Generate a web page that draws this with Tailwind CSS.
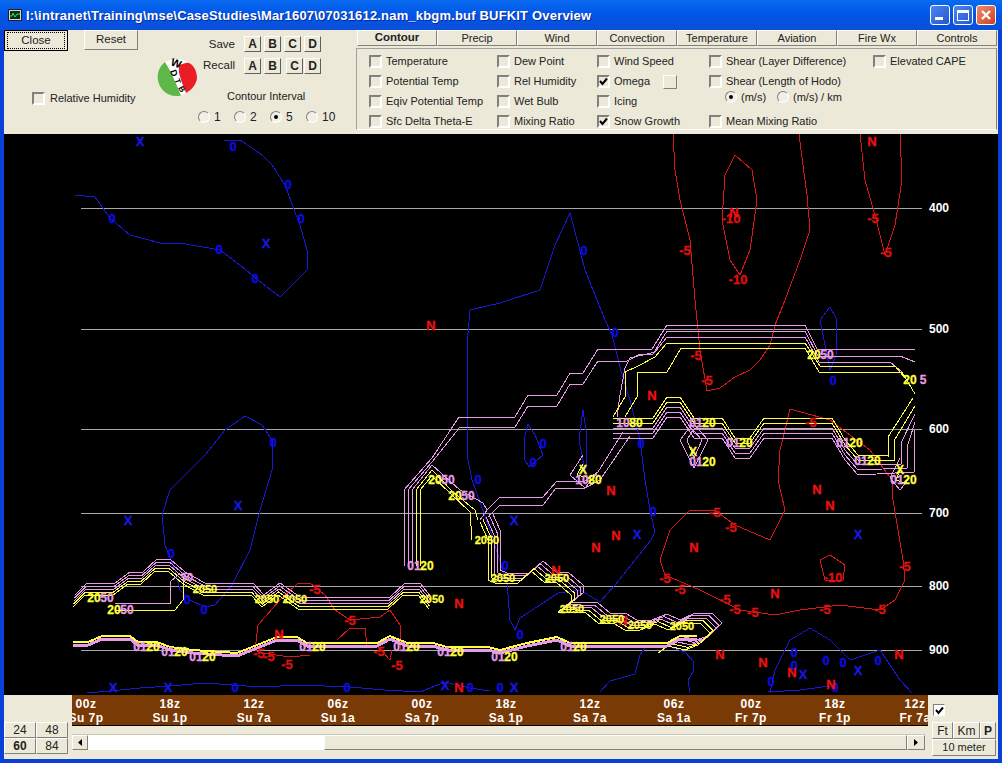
<!DOCTYPE html>
<html lang="en">
<head>
  <meta charset="UTF-8" />
  <title>BUFKIT Overview</title>
  <script src="https://cdn.jsdelivr.net/npm/@tailwindcss/browser@4"></script>
</head>
<body class="w-[1002px] h-[763px] overflow-hidden flex flex-col bg-[#0a3fd8] text-[11px] leading-none text-black font-['Liberation_Sans',sans-serif]">
  <!-- title bar -->
  <header class="h-[30px] shrink-0 flex items-center pl-[8px] pr-[6px] bg-gradient-to-b from-[#0a6af0] via-[#0255e8] to-[#0a4fd8]">
    <svg width="14" height="12" viewBox="0 0 14 12" class="shrink-0">
      <rect x="0.5" y="0.5" width="13" height="11" fill="#d8d8d8" stroke="#202020" />
      <rect x="2" y="2" width="10" height="8" fill="#083018" />
      <path d="M2 7h2l1-3 2 4 2-3h3" fill="none" stroke="#40e040" />
    </svg>
    <h1 class="ml-[4px] flex-1 text-white font-bold text-[13px] tracking-[0.18px] whitespace-nowrap [text-shadow:1px_1px_0_#0a2a90]">I:\intranet\Training\mse\CaseStudies\Mar1607\07031612.nam_kbgm.buf BUFKIT Overview</h1>
    <div class="flex gap-[3px]">
      <div class="w-[20px] h-[20px] rounded-[3px] border border-white bg-gradient-to-br from-[#4f86f0] to-[#2455d0] flex items-end pl-[4px] pb-[4px]"><span class="block w-[8px] h-[3px] bg-white"></span></div>
      <div class="w-[20px] h-[20px] rounded-[3px] border border-white bg-gradient-to-br from-[#4f86f0] to-[#2455d0] flex items-center justify-center"><span class="block w-[12px] h-[11px] border border-white border-t-[3px]"></span></div>
      <div class="w-[20px] h-[20px] rounded-[3px] border border-white bg-gradient-to-br from-[#ec8a6c] to-[#d03c18] flex items-center justify-center">
        <svg width="12" height="12" viewBox="0 0 12 12"><path d="M2 2l8 8M10 2l-8 8" stroke="#fff" stroke-width="2.4" /></svg>
      </div>
    </div>
  </header>

  <main class="flex-1 mx-[4px] mb-[4px] flex flex-col bg-[#ece9d8] min-h-0">
    <!-- toolbar -->
    <section class="h-[104px] shrink-0 flex">
      <div class="w-[150px] shrink-0">
        <div class="flex items-start">
          <button class="w-[64px] h-[21px] border border-black bg-[#ece9d8] flex items-center justify-center text-[#222] text-[11.5px]"><span class="border border-dotted border-black px-[8px] py-[2px] w-[58px]">Close</span></button>
          <button class="ml-[16px] w-[54px] h-[20px] bg-[#ece9d8] border border-t-white border-l-white border-r-[#808080] border-b-[#808080] text-[#222] text-[11.5px]">Reset</button>
        </div>
        <div class="mt-[41px] ml-[28px] flex items-center gap-[5px]">
          <span class="block w-[13px] h-[13px] border-2 border-t-[#808080] border-l-[#808080] border-r-white border-b-white bg-[#ece9d8]"></span>
          <span class="text-[#222] whitespace-nowrap">Relative Humidity</span>
        </div>
      </div>

      <div class="w-[43px] shrink-0 pl-[3px] pt-[27px]">
        <svg width="40" height="40" viewBox="0 0 40 40">
          <path d="M8 5A19 19 0 0 0 24 38.5C20 28 14 14 8 5Z" fill="#5cb848" />
          <path d="M22 8C28 2 39 6 40 20C40 28 33 34 29 36C26 28 20 16 22 8Z" fill="#ec1c24" />
          <path d="M8 5Q20 -1 32 5L22 8C20 16 26 28 29 36L24 38.5C20 28 14 14 8 5Z" fill="#fff" />
          <g font-family="Liberation Sans, sans-serif" font-weight="700" fill="#000" text-anchor="middle">
            <text x="19" y="10" font-size="11" transform="rotate(20 19 7)">W</text>
            <text x="17" y="19" font-size="9" transform="rotate(70 17 16)">D</text>
            <text x="21" y="27" font-size="8" transform="rotate(70 21 24)">T</text>
            <text x="25" y="35" font-size="8" transform="rotate(60 25 32)">B</text>
          </g>
        </svg>
      </div>

      <div class="w-[159px] shrink-0 pt-[6px] text-[#222]">
        <div class="flex items-center h-[16px] text-[11.5px]">
          <span class="w-[38px] text-right mr-[9px] mt-[2px]">Save</span>
          <div class="flex gap-[3px] font-bold text-[12px]">
            <button class="w-[17px] h-[16px] bg-[#ece9d8] border border-t-white border-l-white border-r-[#606060] border-b-[#606060]">A</button>
            <button class="w-[17px] h-[16px] bg-[#ece9d8] border border-t-white border-l-white border-r-[#606060] border-b-[#606060]">B</button>
            <button class="w-[17px] h-[16px] bg-[#ece9d8] border border-t-white border-l-white border-r-[#606060] border-b-[#606060]">C</button>
            <button class="w-[17px] h-[16px] bg-[#ece9d8] border border-t-white border-l-white border-r-[#606060] border-b-[#606060]">D</button>
          </div>
        </div>
        <div class="flex items-center h-[16px] mt-[6px] text-[11.5px]">
          <span class="w-[38px] text-right mr-[9px]">Recall</span>
          <div class="flex gap-[3px] font-bold text-[12px]">
            <button class="w-[17px] h-[16px] bg-[#ece9d8] border border-t-white border-l-white border-r-[#606060] border-b-[#606060]">A</button>
            <button class="w-[17px] h-[16px] bg-[#ece9d8] border border-t-white border-l-white border-r-[#606060] border-b-[#606060]">B</button>
            <button class="ml-[2px] w-[17px] h-[16px] bg-[#ece9d8] border border-t-white border-l-white border-r-[#606060] border-b-[#606060]">C</button>
            <button class="ml-[-2px] w-[17px] h-[16px] bg-[#ece9d8] border border-t-white border-l-white border-r-[#606060] border-b-[#606060]">D</button>
          </div>
        </div>
        <p class="mt-[17px] ml-[30px] whitespace-nowrap">Contour Interval</p>
        <div class="mt-[9px] flex items-center text-[12px]">
          <span class="block ml-[1px] w-[12px] h-[12px] rounded-full border border-t-[#808080] border-l-[#808080] border-r-white border-b-white bg-[#f2f0e6]"></span><span class="ml-[4px] w-[20px]">1</span>
          <span class="block w-[12px] h-[12px] rounded-full border border-t-[#808080] border-l-[#808080] border-r-white border-b-white bg-[#f2f0e6]"></span><span class="ml-[4px] w-[20px]">2</span>
          <span class="w-[12px] h-[12px] rounded-full border border-t-[#808080] border-l-[#808080] border-r-white border-b-white bg-[#f2f0e6] flex items-center justify-center"><span class="block w-[4px] h-[4px] rounded-full bg-black"></span></span><span class="ml-[4px] w-[20px]">5</span>
          <span class="block w-[12px] h-[12px] rounded-full border border-t-[#808080] border-l-[#808080] border-r-white border-b-white bg-[#f2f0e6]"></span><span class="ml-[4px]">10</span>
        </div>
      </div>

      <div class="flex-1 min-w-0">
        <nav class="h-[16px] flex pl-[1px] text-[#222]">
          <button class="w-[80px] h-[16px] font-bold text-[11.5px] border border-t-white border-l-white border-r-[#808080] border-b-[#808080]">Contour</button>
          <button class="w-[80px] h-[16px] border border-t-white border-l-white border-r-[#808080] border-b-[#808080]">Precip</button>
          <button class="w-[80px] h-[16px] border border-t-white border-l-white border-r-[#808080] border-b-[#808080]">Wind</button>
          <button class="w-[80px] h-[16px] border border-t-white border-l-white border-r-[#808080] border-b-[#808080]">Convection</button>
          <button class="w-[80px] h-[16px] border border-t-white border-l-white border-r-[#808080] border-b-[#808080]">Temperature</button>
          <button class="w-[80px] h-[16px] border border-t-white border-l-white border-r-[#808080] border-b-[#808080]">Aviation</button>
          <button class="w-[80px] h-[16px] border border-t-white border-l-white border-r-[#808080] border-b-[#808080]">Fire Wx</button>
          <button class="w-[80px] h-[16px] border border-t-white border-l-white border-r-[#808080] border-b-[#808080]">Controls</button>
        </nav>
        <div class="mt-[2px] w-[641px] h-[82px] border border-t-[#a0a0a0] border-l-[#a0a0a0] border-r-[#808080] border-b-white flex pl-[12px] text-[#222] whitespace-nowrap">
          <div class="w-[128px] flex flex-col pt-[6px] gap-[7px]">
            <label class="h-[13px] flex items-center gap-[4px]"><span class="block w-[13px] h-[13px] border-2 border-t-[#808080] border-l-[#808080] border-r-white border-b-white bg-[#ece9d8]"></span>Temperature</label>
            <label class="h-[13px] flex items-center gap-[4px]"><span class="block w-[13px] h-[13px] border-2 border-t-[#808080] border-l-[#808080] border-r-white border-b-white bg-[#ece9d8]"></span>Potential Temp</label>
            <label class="h-[13px] flex items-center gap-[4px]"><span class="block w-[13px] h-[13px] border-2 border-t-[#808080] border-l-[#808080] border-r-white border-b-white bg-[#ece9d8]"></span>Eqiv Potential Temp</label>
            <label class="h-[13px] flex items-center gap-[4px]"><span class="block w-[13px] h-[13px] border-2 border-t-[#808080] border-l-[#808080] border-r-white border-b-white bg-[#ece9d8]"></span>Sfc Delta Theta-E</label>
          </div>
          <div class="w-[100px] flex flex-col pt-[6px] gap-[7px]">
            <label class="h-[13px] flex items-center gap-[4px]"><span class="block w-[13px] h-[13px] border-2 border-t-[#808080] border-l-[#808080] border-r-white border-b-white bg-[#ece9d8]"></span>Dew Point</label>
            <label class="h-[13px] flex items-center gap-[4px]"><span class="block w-[13px] h-[13px] border-2 border-t-[#808080] border-l-[#808080] border-r-white border-b-white bg-[#ece9d8]"></span>Rel Humidity</label>
            <label class="h-[13px] flex items-center gap-[4px]"><span class="block w-[13px] h-[13px] border-2 border-t-[#808080] border-l-[#808080] border-r-white border-b-white bg-[#ece9d8]"></span>Wet Bulb</label>
            <label class="h-[13px] flex items-center gap-[4px]"><span class="block w-[13px] h-[13px] border-2 border-t-[#808080] border-l-[#808080] border-r-white border-b-white bg-[#ece9d8]"></span>Mixing Ratio</label>
          </div>
          <div class="w-[112px] flex flex-col pt-[6px] gap-[7px]">
            <label class="h-[13px] flex items-center gap-[4px]"><span class="block w-[13px] h-[13px] border-2 border-t-[#808080] border-l-[#808080] border-r-white border-b-white bg-[#ece9d8]"></span>Wind Speed</label>
            <label class="h-[13px] flex items-center gap-[4px]"><span class="w-[13px] h-[13px] border-2 border-t-[#808080] border-l-[#808080] border-r-white border-b-white bg-[#ece9d8] flex items-center justify-center"><svg width="9" height="9" viewBox="0 0 9 9"><path d="M1 4l2.5 3L8 1.5" fill="none" stroke="#000" stroke-width="2" /></svg></span>Omega<span class="block ml-[9px] w-[14px] h-[14px] border border-t-white border-l-white border-r-[#808080] border-b-[#808080]"></span></label>
            <label class="h-[13px] flex items-center gap-[4px]"><span class="block w-[13px] h-[13px] border-2 border-t-[#808080] border-l-[#808080] border-r-white border-b-white bg-[#ece9d8]"></span>Icing</label>
            <label class="h-[13px] flex items-center gap-[4px]"><span class="w-[13px] h-[13px] border-2 border-t-[#808080] border-l-[#808080] border-r-white border-b-white bg-[#ece9d8] flex items-center justify-center"><svg width="9" height="9" viewBox="0 0 9 9"><path d="M1 4l2.5 3L8 1.5" fill="none" stroke="#000" stroke-width="2" /></svg></span>Snow Growth</label>
          </div>
          <div class="w-[164px] flex flex-col pt-[6px]">
            <label class="h-[13px] flex items-center gap-[4px]"><span class="block w-[13px] h-[13px] border-2 border-t-[#808080] border-l-[#808080] border-r-white border-b-white bg-[#ece9d8]"></span>Shear (Layer Difference)</label>
            <label class="mt-[7px] h-[13px] flex items-center gap-[4px]"><span class="block w-[13px] h-[13px] border-2 border-t-[#808080] border-l-[#808080] border-r-white border-b-white bg-[#ece9d8]"></span>Shear (Length of Hodo)</label>
            <div class="mt-[3px] ml-[16px] h-[12px] flex items-center">
              <span class="w-[12px] h-[12px] rounded-full border border-t-[#808080] border-l-[#808080] border-r-white border-b-white bg-[#f2f0e6] flex items-center justify-center"><span class="block w-[4px] h-[4px] rounded-full bg-black"></span></span>
              <span class="ml-[4px] w-[36px]">(m/s)</span>
              <span class="block w-[12px] h-[12px] rounded-full border border-t-[#808080] border-l-[#808080] border-r-white border-b-white bg-[#f2f0e6]"></span>
              <span class="ml-[4px]">(m/s) / km</span>
            </div>
            <label class="mt-[12px] h-[13px] flex items-center gap-[4px]"><span class="block w-[13px] h-[13px] border-2 border-t-[#808080] border-l-[#808080] border-r-white border-b-white bg-[#ece9d8]"></span>Mean Mixing Ratio</label>
          </div>
          <div class="flex flex-col pt-[6px]">
            <label class="h-[13px] flex items-center gap-[4px]"><span class="block w-[13px] h-[13px] border-2 border-t-[#808080] border-l-[#808080] border-r-white border-b-white bg-[#ece9d8]"></span>Elevated CAPE</label>
          </div>
        </div>
      </div>
    </section>

    <!-- contour chart, drawn in window coordinates -->
    <svg id="chart" class="block h-[561px] w-[994px] shrink-0 bg-black" viewBox="4 134 994 561" font-family="Liberation Sans, sans-serif" font-weight="700"></svg>

    <!-- time axis and controls -->
    <section class="flex-1 flex min-h-0 text-[#222]">
      <div class="w-[68px] shrink-0 pt-[27px]">
        <div class="w-[64px] grid grid-cols-2 text-[12px]">
          <button class="h-[16px] border border-t-white border-l-white border-r-[#808080] border-b-[#808080]">24</button>
          <button class="h-[16px] border border-t-white border-l-white border-r-[#808080] border-b-[#808080]">48</button>
          <button class="h-[16px] font-bold border border-t-white border-l-white border-r-[#808080] border-b-[#808080]">60</button>
          <button class="h-[16px] border border-t-white border-l-white border-r-[#808080] border-b-[#808080]">84</button>
        </div>
      </div>
      <div class="w-[856px] shrink-0">
        <div class="h-[31px] bg-[#7a3a06] border-b border-black overflow-hidden flex text-white font-bold text-[12px] tracking-[0.5px] leading-[14px] pt-[2px]">
          <div class="w-[84px] shrink-0 text-center ml-[-28px]">00z<br />Su 7p</div>
          <div class="w-[84px] shrink-0 text-center">18z<br />Su 1p</div>
          <div class="w-[84px] shrink-0 text-center">12z<br />Su 7a</div>
          <div class="w-[84px] shrink-0 text-center">06z<br />Su 1a</div>
          <div class="w-[84px] shrink-0 text-center">00z<br />Sa 7p</div>
          <div class="w-[84px] shrink-0 text-center">18z<br />Sa 1p</div>
          <div class="w-[84px] shrink-0 text-center">12z<br />Sa 7a</div>
          <div class="w-[84px] shrink-0 text-center">06z<br />Sa 1a</div>
          <div class="w-[84px] shrink-0 text-center ml-[-7px]">00z<br />Fr 7p</div>
          <div class="w-[84px] shrink-0 text-center">18z<br />Fr 1p</div>
          <div class="w-[84px] shrink-0 text-center ml-[-4px]">12z<br />Fr 7a</div>
        </div>
        <div class="mt-[8px] h-[16px] w-[853px] flex border-t border-[#c8c8b8]">
          <button class="w-[16px] h-[15px] shrink-0 border border-t-white border-l-white border-r-[#808080] border-b-[#808080] flex items-center justify-center"><svg width="4" height="7" viewBox="0 0 4 7"><path d="M4 0v7L0 3.5z" /></svg></button>
          <div class="w-[236px] h-[15px] bg-white"></div>
          <div class="flex-1 h-[15px] border border-t-white border-l-white border-r-[#808080] border-b-[#808080]"></div>
          <button class="w-[18px] h-[15px] shrink-0 border border-t-white border-l-white border-r-[#808080] border-b-[#808080] flex items-center justify-center"><svg width="4" height="7" viewBox="0 0 4 7"><path d="M0 0v7l4-3.5z" /></svg></button>
        </div>
      </div>
      <div class="flex-1 pl-[4px]">
        <div class="pl-[1px] pt-[9px] h-[27px]">
          <span class="w-[12px] h-[12px] border border-t-[#808080] border-l-[#808080] border-r-white border-b-white bg-white flex items-center justify-center"><svg width="9" height="9" viewBox="0 0 9 9"><path d="M1 4l2.5 3L8 1.5" fill="none" stroke="#000" stroke-width="2" /></svg></span>
        </div>
        <div class="flex h-[17px] text-[12px]">
          <button class="w-[21px] border border-t-white border-l-white border-r-[#808080] border-b-[#808080]">Ft</button>
          <button class="w-[27px] border border-t-white border-l-white border-r-[#808080] border-b-[#808080]">Km</button>
          <button class="w-[16px] font-bold border border-t-white border-l-white border-r-[#808080] border-b-[#808080]">P</button>
        </div>
        <button class="w-[64px] h-[17px] border border-t-white border-l-white border-r-[#808080] border-b-[#808080]">10 meter</button>
      </div>
    </section>
  </main>

  <script>
    const svg = document.getElementById('chart');
    const NS = 'http://www.w3.org/2000/svg';
    const PINK = '#e89ce8', YELLOW = '#ffff40', BLUE = '#1818d0', RED = '#d81818';

    function el(name, attrs, text) {
      const e = document.createElementNS(NS, name);
      for (const k in attrs) e.setAttribute(k, attrs[k]);
      if (text) e.textContent = text;
      svg.appendChild(e);
    }
    function line(pts, color, width = 1, close = false) {
      const p = pts.slice();
      if (close) p.push(p[0]);
      el('polyline', { points: p.map(q => q.join(',')).join(' '), fill: 'none', stroke: color, 'stroke-width': width, 'shape-rendering': 'crispEdges' });
    }
    // stack of parallel contours: each next line moves down and to the left
    function band(pts, colors, dy, dx) {
      colors.forEach((c, i) => line(pts.map(([x, y]) => [x - i * dx, y + i * dy]), c));
    }
    function label(x, y, text, color, size = 13) {
      el('text', { x, y: y + size * 0.36, 'text-anchor': 'middle', fill: color, 'font-size': size, stroke: color, 'stroke-width': 0.3 }, text);
    }
    // overlapping pink and yellow contour values
    function pair(x, y, a = '01', b = '20') {
      label(x - 7, y, a, PINK, 12);
      label(x + 6, y, b, YELLOW, 12);
    }

    // pressure levels
    [[208, '400'], [329, '500'], [429, '600'], [513, '700'], [586, '800'], [650, '900']].forEach(([y, t]) => {
      line([[81, y], [922, y]], '#a8a8a8');
      el('text', { x: 929, y: y + 4, fill: '#fff', 'font-size': 12 }, t);
    });

    // omega (blue)
    line([[224,140],[240,140],[262,155],[272,165],[285,185],[295,212],[300,225],[307,250],[307,270],[280,297],[258,280],[240,265],[220,250],[180,243],[160,243],[130,235],[110,218],[95,197],[75,195]], BLUE);
    line([[651,540],[635,560],[615,585],[600,602],[580,590],[558,593],[540,605],[520,618],[515,630],[510,620],[507,583],[490,530],[472,480],[467,455],[467,345],[470,310],[500,303],[540,290],[555,245],[570,213],[585,270],[605,320],[612,335],[622,375],[630,400],[640,440],[645,480],[650,510],[655,532],[651,540]], BLUE);
    line([[245,416],[225,430],[205,455],[170,490],[162,515],[165,545],[175,570],[180,590],[190,600],[205,607],[215,605],[232,585],[250,550],[260,510],[272,470],[272,440],[262,425]], BLUE, 1, true);
    line([[528,424],[524,440],[525,460],[529,467],[543,455],[535,435]], BLUE, 1, true);
    line([[583,410],[579,440],[585,470],[587,465],[586,430]], BLUE, 1, true);
    line([[820,320],[830,307],[836,318],[836,355],[830,370],[825,345]], BLUE, 1, true);
    line([[87,693],[110,691],[140,688],[170,686],[205,683],[260,687],[300,685],[350,687],[385,690],[420,692],[435,686],[445,682],[470,688],[490,691]], BLUE);
    line([[600,692],[610,681],[635,674],[640,655],[646,646],[665,645],[685,652],[694,662],[693,672],[688,680],[690,693]], BLUE);
    line([[770,693],[775,670],[790,640],[810,628],[830,640],[850,660],[880,650],[900,680],[912,693]], BLUE);
    line([[768,692],[800,690],[830,686]], BLUE);

    // temperature (red)
    line([[673,134],[675,170],[680,200],[690,240],[695,300],[700,350],[707,391],[720,388],[735,377],[750,370],[760,360],[770,345],[775,325],[785,300],[800,260],[810,230],[807,195],[803,165],[799,134]], RED);
    line([[735,155],[725,175],[722,220],[730,260],[740,275],[750,250],[757,200],[752,170]], RED, 1, true);
    line([[860,134],[865,180],[875,215],[885,255],[895,225],[902,180],[900,134]], RED);
    line([[785,510],[778,480],[780,450],[785,430],[790,409],[830,420],[870,450],[892,480],[893,500],[903,560],[905,580],[895,600],[880,610],[840,605],[800,610],[775,615],[740,610],[700,590],[665,575],[660,560],[670,530],[690,510],[715,510],[735,525],[770,540]], RED, 1, true);
    line([[820,560],[830,555],[845,565],[843,580],[825,580]], RED, 1, true);
    line([[297,584],[310,583],[325,595],[335,610],[350,620],[380,617],[390,610],[400,625],[400,650]], RED);
    line([[297,584],[280,600],[258,625],[255,650],[262,653],[290,657],[310,655]], RED);
    line([[337,640],[350,628],[365,628],[367,645]], RED);
    line([[377,645],[390,660],[392,650]], RED);

    // snow growth bands (pink and yellow)
    line([[404,566],[404,490],[432,458],[459,417],[515,417],[528,395],[557,395],[570,373],[583,373],[598,349],[652,349],[667,325],[805,325],[817,349],[915,349]], PINK);
    line([[408,566],[408,490],[432,462],[460,427],[515,427],[528,406],[557,406],[570,384],[583,384],[598,361],[627,361],[640,354],[653,354],[667,331],[805,331],[818,356],[900,356],[915,362]], PINK);
    line([[412,566],[412,490],[432,465],[460,490],[483,503],[487,510],[480,520]], PINK);
    line([[416,566],[416,490],[432,470],[453,492],[475,510],[478,520]], YELLOW);
    line([[420,566],[420,490],[432,476],[470,512],[472,540]], YELLOW);
    line([[805,337],[667,337],[655,352],[630,358],[625,368],[620,395],[617,417]], PINK);
    line([[805,343],[667,343],[655,357],[638,366],[625,372],[625,397],[613,417]], YELLOW);
    line([[805,348],[681,348],[667,372],[637,372],[637,397],[625,417]], YELLOW);
    line([[805,337],[819,362],[890,362],[902,372]], PINK);
    line([[805,343],[820,366],[895,366],[905,378]], YELLOW);
    line([[805,348],[819,372],[902,372],[915,394]], YELLOW);

    // 600 mb stack: the right end turns upward, each line with its own corner
    const mid = [[613,418],[653,418],[667,397],[680,397],[694,418],[722,418],[735,438],[750,438],[764,418],[832,418],[845,440],[858,455]];
    [YELLOW, YELLOW, PINK, PINK, PINK].forEach((c, i) => {
      const x = 888 + i * 6.5;
      line(mid.map(([px, py]) => [px, py + i * 5]).concat([[x, 456 + i * 4], [x, 437 + i * 3], [Math.min(x + 25, 915), 398 + i * 8]]), c);
    });
    line([[623,432],[598,472],[585,481],[557,481],[543,497],[500,497],[487,510],[480,520]], PINK);
    line([[630,436],[600,480],[585,488],[556,488],[543,505],[500,505],[488,517]], PINK);
    line([[693,423],[680,440],[694,468],[708,440]], PINK, 1, true);
    line([[693,430],[687,440],[694,458],[702,440]], PINK, 1, true);
    line([[583,455],[570,475],[585,488],[598,472]], PINK);
    line([[583,464],[577,475],[590,478]], YELLOW);
    line([[900,458],[890,478],[900,490],[908,480]], PINK);
    line([[900,470],[896,480],[904,483]], YELLOW);

    band([[492,512],[500,530],[500,570],[507,573],[530,573],[543,561],[556,572],[568,572],[583,585],[583,593],[570,602],[598,603],[610,613],[625,613],[637,620],[652,620],[667,614],[680,620],[695,613],[712,613],[722,623],[710,635],[697,640],[680,636],[670,643]], [PINK, PINK, PINK, YELLOW, YELLOW], 2.5, 3);
    band([[75,595],[87,583],[115,583],[130,572],[143,572],[157,559],[170,559],[185,572],[205,583],[253,583],[264,595],[280,583],[300,597],[390,597],[405,583],[420,583],[431,597]], [PINK, PINK, PINK, YELLOW, YELLOW], 3, 0.5);
    line([[115,603],[170,603],[170,582],[178,575],[190,573]], PINK);
    line([[115,610],[175,610],[183,600],[183,578]], YELLOW);

    // thin band near 900 mb
    const thin = [[73,642],[88,642],[102,636],[130,636],[138,642],[157,642],[170,647],[193,650],[237,653],[252,647],[277,637],[297,637],[307,643],[377,643],[390,636],[407,643],[433,643],[447,647],[488,647],[500,650],[527,643],[557,637],[570,643],[667,643],[680,636],[697,636]];
    line(thin.map(([x, y]) => [x, y + 3]), PINK, 3);
    line(thin, YELLOW, 2);

    // contour values
    [[233,146],[288,184],[301,218],[112,218],[219,249],[255,278],[273,442],[171,553],[187,599],[204,609],[584,250],[615,332],[641,443],[543,443],[533,462],[478,479],[653,511],[505,565],[520,634],[833,380],[794,652],[794,665],[826,660],[843,662],[878,660],[771,681],[835,687],[235,687],[347,687],[470,687],[500,687]].forEach(([x, y]) => label(x, y, '0', '#0c0ce0'));
    [[685,250],[696,355],[707,380],[811,422],[905,566],[880,609],[825,609],[873,218],[886,252],[715,512],[731,527],[665,578],[680,589],[725,599],[735,609],[753,612],[315,589],[350,620],[259,653],[269,656],[287,664],[379,651],[397,665]].forEach(([x, y]) => label(x, y, '-5', '#e01010'));
    [[731,218],[738,279],[833,577]].forEach(([x, y]) => label(x, y, '-10', '#e01010'));
    [[431,325],[652,395],[611,490],[616,535],[596,547],[694,547],[817,489],[830,505],[775,593],[459,603],[720,654],[763,662],[792,672],[899,654],[831,684],[459,687],[872,141],[734,212],[279,634],[556,570],[623,620]].forEach(([x, y]) => label(x, y, 'N', '#f01010'));
    [[140,141],[266,243],[128,520],[238,505],[514,520],[637,534],[858,534],[803,674],[858,670],[445,685],[113,687],[168,687],[514,687]].forEach(([x, y]) => label(x, y, 'X', '#1818e0'));
    [[583,470],[693,452],[900,470]].forEach(([x, y]) => label(x, y, 'X', YELLOW, 12));

    [[100,598,'20','50'],[120,610,'20','50'],[441,480,'20','50'],[461,496,'20','50'],[820,355,'20','50'],[916,380,'20','5']].forEach(([x, y, a, b]) => { label(x - 6, y, a, YELLOW, 12); label(x + 7, y, b, PINK, 12); });
    [[205,589],[267,599],[295,599],[432,599],[487,540],[503,578],[557,578],[572,609],[612,619],[640,625],[682,626]].forEach(([x, y]) => label(x, y, '2050', YELLOW, 11));
    label(187, 577, '50', PINK, 11);
    [[147,647],[175,652],[203,657],[313,647],[407,647],[451,652],[505,657],[574,647],[421,566],[703,423],[703,462],[740,443],[850,443],[868,461],[904,480]].forEach(([x, y]) => pair(x, y));
    [[589,480],[630,423]].forEach(([x, y]) => pair(x, y, '10', '80'));
  </script>
</body>
</html>
